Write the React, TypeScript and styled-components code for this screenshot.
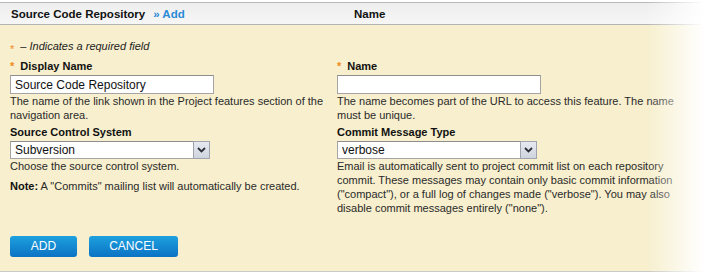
import React from "react";
import styled, { createGlobalStyle } from "styled-components";

const Global = createGlobalStyle`
  html, body { margin: 0; padding: 0; background: #fff; }
  body { font-family: "Liberation Sans", Arial, sans-serif; color: #222; }
`;

const Page = styled.div`
  position: relative;
  padding-top: 2px;
  width: 704px;
`;

const Fade = styled.div`
  position: absolute;
  top: 0;
  right: 0;
  bottom: 0;
  width: 58px;
  background: linear-gradient(to right, rgba(255,255,255,0), #fff);
  pointer-events: none;
`;

const Header = styled.div`
  display: flex;
  align-items: center;
  height: 21px;
  border-top: 1px solid #b9b9b9;
  border-bottom: 1px solid #b3b3b3;
  background: linear-gradient(#eeeeee, #f6f6f6);
  font-size: 11.5px;
  font-weight: bold;
  color: #111;
`;

const HeaderCell = styled.div<{ $w?: number }>`
  ${(p) => (p.$w ? `width: ${p.$w}px;` : "flex: 1;")}
  padding-left: ${(p) => (p.$w ? 11 : 0)}px;
  box-sizing: border-box;
`;

const Crumb = styled.span`
  color: #2a8ad6;
  margin-left: 8px;
`;

const Panel = styled.div`
  background: #f7efcd;
  border-bottom: 1px solid #c9c9c5;
  padding: 14px 10px 14px 10px;
  font-size: 11px;
  line-height: 14px;
`;

const Required = styled.div`
  font-style: italic;
  color: #222;
  margin-bottom: 6px;
`;

const Star = styled.span<{ $low?: boolean }>`
  color: #f0891c;
  font-style: normal;
  font-size: ${(p) => (p.$low ? 11 : 11)}px;
  position: relative;
  top: ${(p) => (p.$low ? 3 : 0)}px;
  margin-right: 6px;
`;

const Grid = styled.div`
  display: grid;
  grid-template-columns: 327px 345px;
`;

const Column = styled.div`
  display: flex;
  flex-direction: column;
`;

const Label = styled.div<{ $gap?: number }>`
  font-weight: bold;
  color: #111;
  margin-top: ${(p) => p.$gap ?? 0}px;
  margin-bottom: 2px;
`;

const TextInput = styled.input`
  box-sizing: border-box;
  width: 204px;
  height: 19px;
  margin: 0;
  padding: 0 4px;
  border: 1px solid #a5a5a5;
  border-top-color: #8e8e8e;
  background: #fff;
  font-family: "Liberation Sans", Arial, sans-serif;
  font-size: 12px;
  color: #111;
  outline: none;
`;

const SelectWrap = styled.div`
  position: relative;
  width: 200px;
  height: 18px;
`;

const Select = styled.select`
  appearance: none;
  -webkit-appearance: none;
  box-sizing: border-box;
  width: 100%;
  height: 18px;
  margin: 0;
  padding: 0 0 0 4px;
  border: 1px solid #a5a5a5;
  border-top-color: #8e8e8e;
  border-radius: 0;
  background: #fff;
  font-family: "Liberation Sans", Arial, sans-serif;
  font-size: 12px;
  line-height: 16px;
  color: #111;
  outline: none;
`;

const Arrow = styled.span`
  position: absolute;
  top: 0;
  right: 0;
  width: 17px;
  height: 18px;
  box-sizing: border-box;
  border: 1px solid #9ea3ad;
  background: linear-gradient(#e6e9f0, #cfd4de);
  display: flex;
  align-items: center;
  justify-content: center;
  pointer-events: none;
`;

const Help = styled.div`
  color: #2a2a2a;
`;

const Note = styled.div`
  margin-top: 6px;
  color: #2a2a2a;
  b { color: #111; }
`;

const Buttons = styled.div`
  display: flex;
  gap: 12px;
  margin-top: 21px;
`;

const Button = styled.button<{ $w: number }>`
  width: ${(p) => p.$w}px;
  height: 21px;
  padding: 0;
  border: none;
  border-radius: 3px;
  background: linear-gradient(#1da1de, #0b72c4);
  color: #fff;
  font-family: "Liberation Sans", Arial, sans-serif;
  font-size: 12px;
  line-height: 21px;
  cursor: pointer;
`;

const Chevron = () => (
  <svg width="9" height="6" viewBox="0 0 9 6">
    <path d="M1 1 L4.5 4.5 L8 1" fill="none" stroke="#2b2f3a" strokeWidth="1.8" />
  </svg>
);

export default function App() {
  return (
    <>
      <Global />
      <Page>
        <Header>
          <HeaderCell $w={354}>
            Source Code Repository<Crumb>» Add</Crumb>
          </HeaderCell>
          <HeaderCell>Name</HeaderCell>
        </Header>
        <Panel>
          <Required>
            <Star $low>*</Star>– Indicates a required field
          </Required>
          <Grid>
            <Column>
              <Label>
                <Star>*</Star>Display Name
              </Label>
              <TextInput defaultValue="Source Code Repository" />
              <Help>
                The name of the link shown in the Project features section of the navigation area.
              </Help>
              <Label $gap={3}>Source Control System</Label>
              <SelectWrap>
                <Select defaultValue="Subversion">
                  <option>Subversion</option>
                  <option>Git</option>
                </Select>
                <Arrow>
                  <Chevron />
                </Arrow>
              </SelectWrap>
              <Help>Choose the source control system.</Help>
              <Note>
                <b>Note:</b> A "Commits" mailing list will automatically be created.
              </Note>
            </Column>
            <Column>
              <Label>
                <Star>*</Star>Name
              </Label>
              <TextInput defaultValue="" />
              <Help>
                The name becomes part of the URL to access this feature. The name must be unique.
              </Help>
              <Label $gap={3}>Commit Message Type</Label>
              <SelectWrap>
                <Select defaultValue="verbose">
                  <option>verbose</option>
                  <option>compact</option>
                  <option>none</option>
                </Select>
                <Arrow>
                  <Chevron />
                </Arrow>
              </SelectWrap>
              <Help>
                Email is automatically sent to project commit list on each repository commit. These
                messages may contain only basic commit information ("compact"), or a full log of
                changes made ("verbose"). You may also disable commit messages entirely ("none").
              </Help>
            </Column>
          </Grid>
          <Buttons>
            <Button $w={67}>ADD</Button>
            <Button $w={89}>CANCEL</Button>
          </Buttons>
        </Panel>
        <Fade />
      </Page>
    </>
  );
}
